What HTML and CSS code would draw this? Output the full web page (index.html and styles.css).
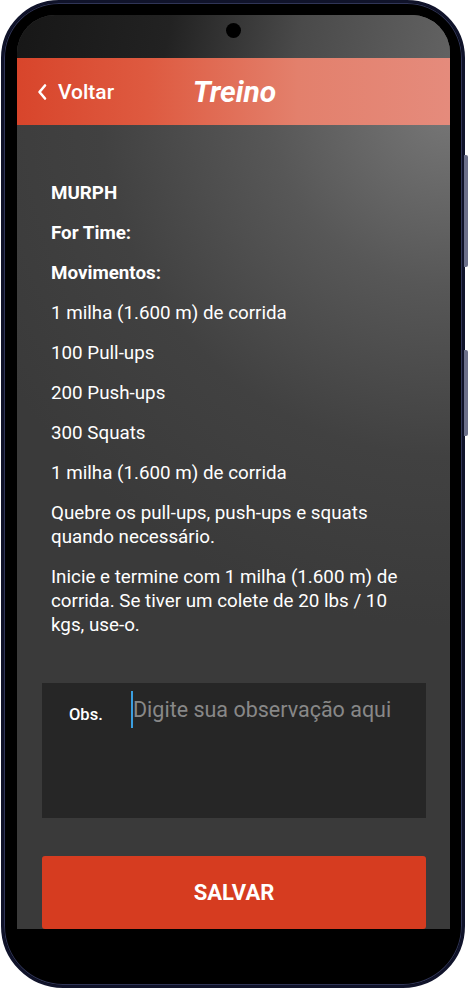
FILE: index.html
```html
<!DOCTYPE html>
<html lang="pt-BR">
<head>
    <meta charset="UTF-8">
    <meta name="viewport" content="width=device-width, initial-scale=1.0">
    <title>Treino</title>
    <link rel="stylesheet" href="styles.css">
</head>
<body>

    <div class="phone">
        <span class="side-btn btn-top"></span>
        <span class="side-btn btn-bottom"></span>

        <div class="screen">
            <div class="status-bar">
                <span class="camera"></span>
            </div>

            <div class="header">
                <a class="back" href="#">
                    <svg width="12" height="18" viewBox="0 0 12 18">
                        <path d="M9 2.5 L3.5 9 L9 15.5" fill="none" stroke="#fff" stroke-width="2.6" stroke-linecap="round" stroke-linejoin="round"/>
                    </svg>
                    Voltar
                </a>
                <h1>Treino</h1>
            </div>

            <div class="content">
                <p class="bold">MURPH</p>
                <p class="bold">For Time:</p>
                <p class="bold">Movimentos:</p>
                <p>1 milha (1.600 m) de corrida</p>
                <p>100 Pull-ups</p>
                <p>200 Push-ups</p>
                <p>300 Squats</p>
                <p>1 milha (1.600 m) de corrida</p>
                <p>Quebre os pull-ups, push-ups e squats quando necessário.</p>
                <p>Inicie e termine com 1 milha (1.600 m) de corrida. Se tiver um colete de 20 lbs / 10 kgs, use-o.</p>

                <div class="obs-box">
                    <label for="obs">Obs.</label>
                    <div class="obs-field">
                        <span class="cursor"></span>
                        <input type="text" id="obs" placeholder="Digite sua observação aqui">
                    </div>
                </div>

                <button class="save">SALVAR</button>
            </div>
        </div>
    </div>

</body>
</html>
```

FILE: styles.css
```css
* {
    box-sizing: border-box;
}

body {
    margin: 0;
    background-color: #fff;
    font-family: Roboto, "Liberation Sans", sans-serif;
}

.phone {
    position: relative;
    width: 464px;
    height: 988px;
    margin-left: 1px;
    padding: 12px 12px 56px 13px;
    background-color: #000;
    border: 3px solid #10132a;
    border-radius: 58px 58px 62px 62px;
    box-shadow: inset 0 0 0 1px #2f3456;
}

.side-btn {
    position: absolute;
    right: -6px;
    width: 4px;
    background-color: #6b6f8a;
    border-radius: 0 2px 2px 0;
}

.btn-top {
    top: 152px;
    height: 112px;
}

.btn-bottom {
    top: 347px;
    height: 86px;
}

.screen {
    height: 100%;
    border-radius: 38px 38px 0 0;
    overflow: hidden;
    background: radial-gradient(circle at 100% 10%, #777 0, #575757 180px, #414141 350px, #3a3a3a 520px);
}

.status-bar {
    height: 43px;
    display: flex;
    justify-content: center;
    padding-top: 8px;
    background: linear-gradient(100deg, #171717 0, #222 35%, #4a4a4a 65%, #626262 100%);
}

.camera {
    width: 15px;
    height: 15px;
    border-radius: 50%;
    background-color: #000;
}

.header {
    position: relative;
    height: 67px;
    display: flex;
    align-items: center;
    justify-content: center;
    background: linear-gradient(90deg, #d8452b 0, #de5a40 30%, #e3806c 65%, #e58b7c 100%);
}

.back {
    position: absolute;
    left: 19px;
    top: 0;
    bottom: 0;
    display: flex;
    align-items: center;
    gap: 10px;
    color: #fff;
    text-decoration: none;
    font-size: 21px;
    font-weight: 500;
}

.header h1 {
    margin: 0 0 0 2px;
    color: #fff;
    font-size: 30px;
    font-weight: bold;
    font-style: italic;
}

.content {
    padding: 56px 24px 0 25px;
}

.content p {
    margin: 0 0 16px 9px;
    padding-right: 12px;
    color: #fff;
    font-size: 18.8px;
    line-height: 24px;
}

.content p.bold {
    font-weight: bold;
}

.obs-box {
    display: flex;
    align-items: flex-start;
    height: 135px;
    margin-top: 46px;
    padding: 8px 0 0 27px;
    background-color: #262626;
}

.obs-box label {
    width: 62px;
    margin-top: 14px;
    color: #fff;
    font-size: 16.5px;
    font-weight: 500;
}

.obs-field {
    display: flex;
    align-items: center;
    height: 37px;
}

.cursor {
    width: 2px;
    height: 37px;
    background-color: #3b9fe0;
}

.obs-field input {
    width: 280px;
    padding: 0;
    border: none;
    outline: none;
    background: transparent;
    color: #fff;
    font-family: Roboto, "Liberation Sans", sans-serif;
    font-size: 21.5px;
}

.obs-field input::placeholder {
    color: #888;
}

.save {
    display: block;
    width: 100%;
    height: 73px;
    margin-top: 38px;
    border: none;
    border-radius: 3px;
    background-color: #d63c20;
    color: #fff;
    font-family: Roboto, "Liberation Sans", sans-serif;
    font-size: 22px;
    font-weight: bold;
}
```
